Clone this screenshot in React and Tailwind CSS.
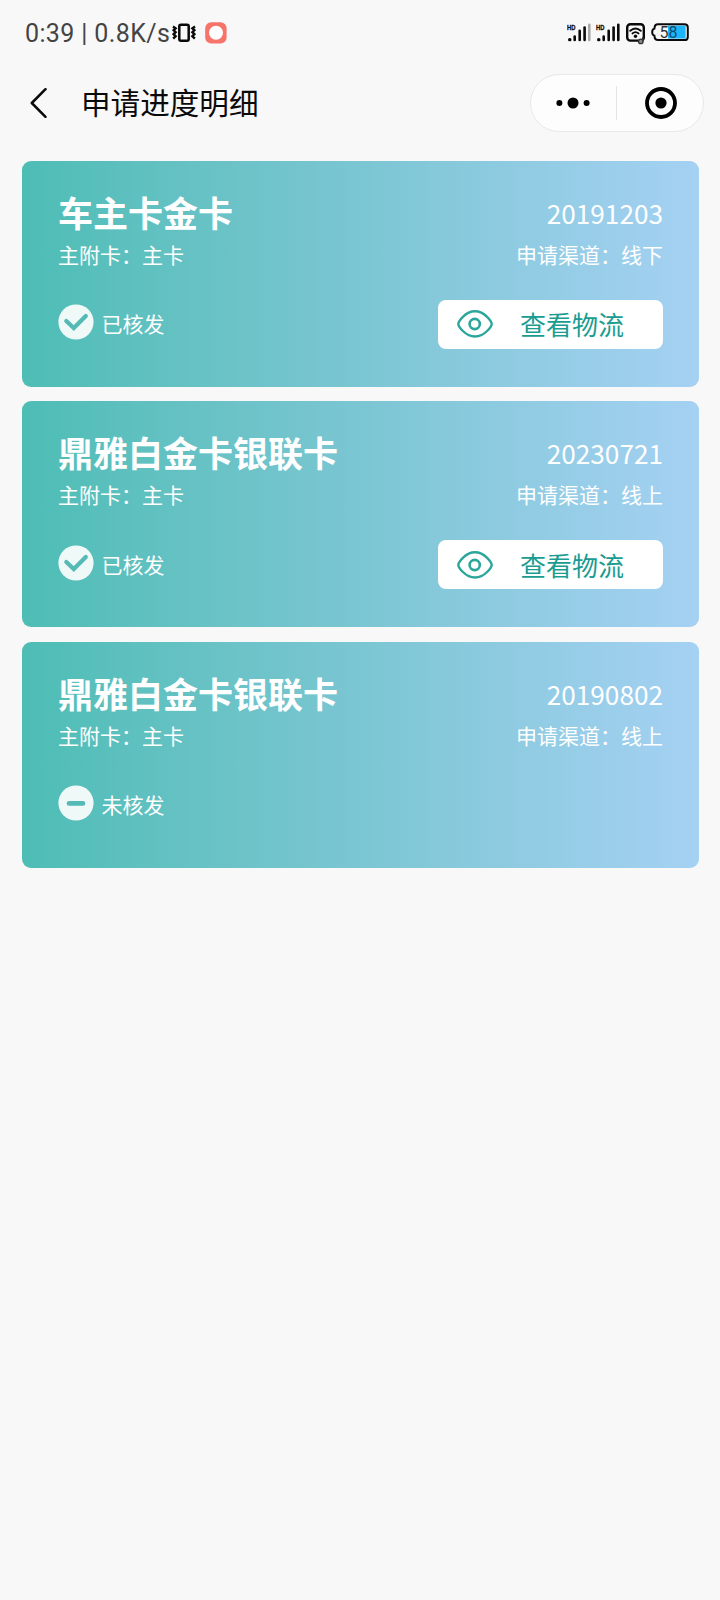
const cards = [
  { name: '车主卡金卡', date: '20191203', channel: '线下', issued: true },
  { name: '鼎雅白金卡银联卡', date: '20230721', channel: '线上', issued: true },
  { name: '鼎雅白金卡银联卡', date: '20190802', channel: '线上', issued: false },
];

function VibrateIcon() {
  return (
    <svg width="24" height="20" viewBox="0 0 24 20" fill="none" stroke="#0a0a0a">
      <rect x="7.3" y="1.7" width="9.4" height="16" rx="1.6" strokeWidth="2.5" />
      <path d="M1 3.5L3.6 5.3L1.6 7.2L3.6 9.2L1.6 11.2L3.6 13.2L1.2 15.6" strokeWidth="2.4" />
      <path d="M23 3.5L20.4 5.3L22.4 7.2L20.4 9.2L22.4 11.2L20.4 13.2L22.8 15.6" strokeWidth="2.4" />
    </svg>
  );
}

function RecordIcon() {
  return (
    <svg width="22" height="22" viewBox="0 0 22 22">
      <rect x="0.2" y="0.2" width="21.4" height="21.4" rx="6" fill="#f6746a" />
      <circle cx="11" cy="10.8" r="7" fill="#fff" />
    </svg>
  );
}

function SignalIcon({ weak }) {
  return (
    <svg width="24" height="20" viewBox="0 0 24 20">
      <text x="0" y="6.6" fontSize="7.4" fontWeight="700" textLength="8.4" lengthAdjust="spacingAndGlyphs" className="font-['Liberation_Sans',sans-serif]" fill="#0a0a0a" stroke="#0a0a0a" strokeWidth="0.3">HD</text>
      <g stroke="#0a0a0a" strokeWidth="2.6" strokeLinecap="round">
        <path d="M2.6 16.7h0.3" strokeWidth="3.2" />
        <path d="M7.7 13.6V17" />
        <path d="M12.7 7.8V17" />
        <path d="M17.6 4.6V17" />
        <path d="M22.3 1.8V17" stroke={weak ? '#aaaaaa' : '#0a0a0a'} />
      </g>
    </svg>
  );
}

function WifiIcon() {
  return (
    <svg width="20" height="22" viewBox="0 0 20 22" fill="none" stroke="#0a0a0a" strokeLinecap="round">
      <rect x="1.2" y="1.2" width="16.6" height="16.4" rx="3.2" strokeWidth="2.4" />
      <path d="M4.2 7.8Q9.5 3.2 14.8 7.8" strokeWidth="1.9" />
      <path d="M6.4 10.5Q9.5 7.8 12.6 10.5" strokeWidth="1.7" />
      <circle cx="9.5" cy="13.3" r="1.7" fill="#0a0a0a" stroke="none" />
      <circle cx="14.8" cy="18.4" r="2.3" fill="#888" stroke="#333" strokeWidth="1.2" />
      <path d="M16.8 18V14.8" stroke="#333" strokeWidth="1.4" />
    </svg>
  );
}

function BatteryIcon() {
  return (
    <svg width="38" height="19" viewBox="0 0 38 19">
      <rect x="17" y="2.6" width="17.6" height="13" fill="#1cb5fa" />
      <path d="M7 1.2H33.4Q36.8 1.2 36.8 4.4V13.9Q36.8 17.1 33.4 17.1H7Q3.8 17.1 3.6 14L3.4 12.6Q1.2 12 1.2 9.2Q1.2 6.2 3.4 5.6L3.6 4.3Q3.8 1.2 7 1.2Z" fill="none" stroke="#0a0a0a" strokeWidth="2" />
      <text x="8.6" y="14.8" fontSize="16" textLength="18" className="font-[Roboto,sans-serif]" fill="#333">5<tspan fill="#0c4a72">8</tspan></text>
    </svg>
  );
}

function EyeIcon() {
  return (
    <svg width="36" height="28" viewBox="0 0 36 28" fill="none" stroke="#2ba69b" strokeWidth="2.4">
      <path d="M1.3 14C1.3 12 8 1.3 18 1.3S34.7 12 34.7 14S28 26.5 18 26.5S1.3 16 1.3 14Z" strokeLinejoin="round" />
      <circle cx="17.7" cy="14" r="5.1" strokeWidth="2.6" />
    </svg>
  );
}

function StatusIcon({ issued }) {
  return (
    <svg width="36" height="36" viewBox="0 0 36 36" fill="none">
      <circle cx="18" cy="18" r="17.6" fill="#fff" fillOpacity="0.9" />
      {issued ? (
        <path d="M8.3 17L15.8 24L27.8 12" stroke="#55b9b5" strokeWidth="4.2" strokeLinecap="round" />
      ) : (
        <path d="M11 18.4H25" stroke="#55bab5" strokeWidth="4.6" strokeLinecap="round" />
      )}
    </svg>
  );
}

function Card({ card }) {
  return (
    <section className="flex h-[226px] flex-col rounded-[9px] bg-linear-to-r from-[#4dbdb5] via-[#7bc6d3] to-[#a5d1f3] pr-[35.5px] pl-[36.5px] text-white">
      <div className="mt-[30px] flex h-[42px] items-center justify-between">
        <h2 className="text-[35px] leading-[42px] font-bold">{card.name}</h2>
        <span className="pt-[3px] text-[26.2px] leading-[39px]">{card.date}</span>
      </div>
      <div className="mt-[6px] flex h-[31px] items-center justify-between text-[21px] leading-[31px]">
        <span>主附卡：主卡</span>
        <span>申请渠道：{card.channel}</span>
      </div>
      <div className="mt-[30px] flex h-[49px] items-center justify-between">
        <div className="-ml-[0.5px] flex items-center gap-[8px]">
          <div className="-mt-[4px]">
            <StatusIcon issued={card.issued} />
          </div>
          <span className="pb-[2px] text-[21px] leading-[30px]">{card.issued ? '已核发' : '未核发'}</span>
        </div>
        {card.issued && (
          <button className="flex h-[49px] w-[225.5px] items-center rounded-[8px] bg-white pl-[19px]">
            <EyeIcon />
            <span className="ml-[27.5px] text-[26px] leading-[48px] text-[#1a9c90]">查看物流</span>
          </button>
        )}
      </div>
    </section>
  );
}

export default function App() {
  return (
    <div className="min-h-[1600px] w-[720px] bg-[#f8f8f8] font-['Noto_Sans_CJK_SC',sans-serif]">
      <div className="flex h-[65px] items-center justify-between pr-[31px] pl-[25px]">
        <div className="flex items-center">
          <span className="w-[147px] pt-[2px] text-[25px] leading-[30px] tracking-[0.38px] whitespace-pre text-[#444] font-[Roboto,sans-serif]">0:39 | 0.8K/s</span>
          <VibrateIcon />
          <div className="ml-[9px]">
            <RecordIcon />
          </div>
        </div>
        <div className="flex items-center">
          <SignalIcon weak />
          <div className="ml-[5px]">
            <SignalIcon />
          </div>
          <div className="mt-[2px] ml-[6px]">
            <WifiIcon />
          </div>
          <div className="ml-[5px]">
            <BatteryIcon />
          </div>
        </div>
      </div>
      <header className="flex h-[76px] items-center pr-[16px] pl-[30px]">
        <svg width="17" height="30" viewBox="0 0 17 30" fill="none" stroke="#0a0a0a" strokeWidth="2.5" strokeLinecap="round" strokeLinejoin="round">
          <path d="M15.5 1.2L1.8 15L15.5 28.8" />
        </svg>
        <h1 className="ml-[34px] pb-[3px] text-[29.6px] leading-[40px] text-[#0a0a0a]">申请进度明细</h1>
        <div className="ml-auto flex h-[58px] w-[174px] items-center rounded-full border border-[#e8e8e8] bg-[#fdfdfd]">
          <div className="flex flex-1 justify-center pr-[1px]">
            <svg width="34" height="12" viewBox="0 0 34 12">
              <circle cx="3.4" cy="6" r="3" />
              <circle cx="17" cy="6" r="5.5" />
              <circle cx="30.6" cy="6" r="3" />
            </svg>
          </div>
          <div className="h-[34px] w-px bg-[#e4e4e4]" />
          <div className="flex flex-1 justify-center pl-[2px]">
            <svg width="32" height="32" viewBox="0 0 32 32">
              <circle cx="16" cy="16" r="14" fill="none" stroke="#000" strokeWidth="3.8" />
              <circle cx="16" cy="16" r="5.6" />
            </svg>
          </div>
        </div>
      </header>
      <main className="flex flex-col gap-[14.5px] px-[21.5px] pt-[19.6px]">
        {cards.map((card, i) => (
          <Card key={i} card={card} />
        ))}
      </main>
    </div>
  );
}
